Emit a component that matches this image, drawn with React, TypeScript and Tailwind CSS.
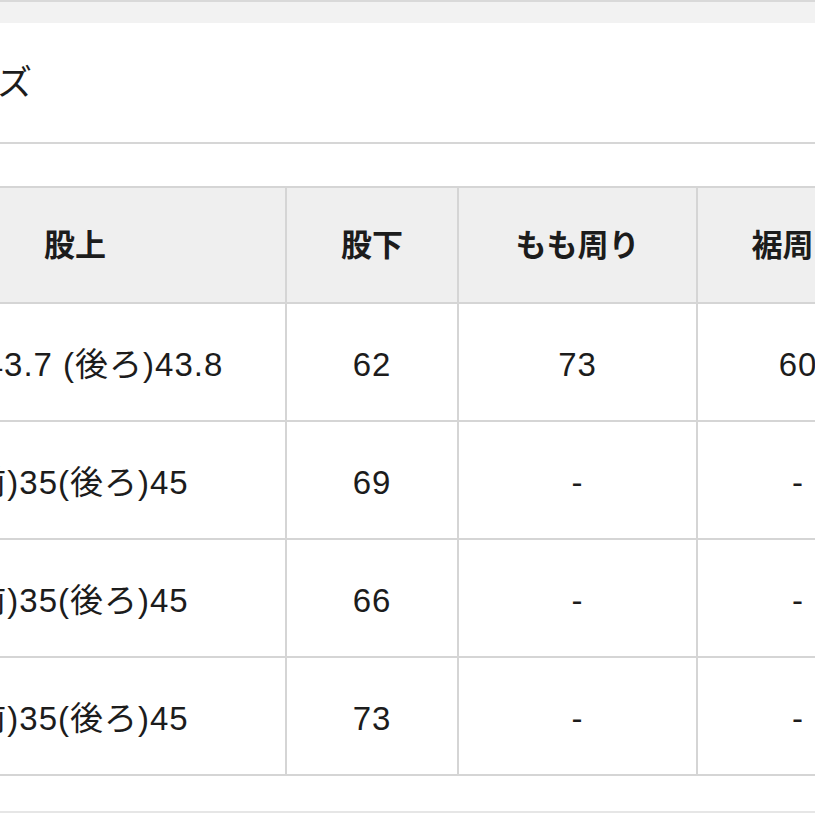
import React from 'react';

const headers = ['股上', '股下', 'もも周り', '裾周り'];

const rows = [
  ['(前)43.7 (後ろ)43.8', '62', '73', '60'],
  ['(前)35(後ろ)45', '69', '-', '-'],
  ['(前)35(後ろ)45', '66', '-', '-'],
  ['(前)35(後ろ)45', '73', '-', '-'],
];

const font = {
  fontFamily: '"Liberation Sans", "Noto Sans CJK JP", sans-serif',
};

export default function App() {
  return (
    <div className="w-[815px] h-[815px] overflow-hidden bg-white text-[#1c1c1c]" style={font}>
      {/* top band */}
      <div className="h-[23px] border-t-2 border-[#d9d9d9] bg-[#f2f2f2]" />

      {/* title */}
      <div className="h-[121px] flex items-center border-b-2 border-[#d6d6d6]">
        <h1 className="ml-[-72px] text-[35px] font-normal leading-none">サイズ</h1>
      </div>

      <div className="h-[42px]" />

      {/* size table */}
      <div className="ml-[-137px] w-[1100px] grid grid-cols-[420px_170px_237px_200px] gap-[2px] p-[2px] bg-[#d5d5d5]">
        {headers.map((h) => (
          <div
            key={h}
            className="h-[114px] flex items-center justify-center pt-[3px] bg-[#efefef] text-[31px] font-bold"
          >
            {h}
          </div>
        ))}
        {rows.map((row, i) =>
          row.map((cell, j) => (
            <div
              key={`${i}-${j}`}
              className="h-[116px] flex items-center justify-center pt-[6px] bg-white text-[33px] tracking-[1px]"
            >
              {cell}
            </div>
          ))
        )}
      </div>

      <div className="h-[37px] border-b-2 border-[#e6e6e6]" />
    </div>
  );
}
